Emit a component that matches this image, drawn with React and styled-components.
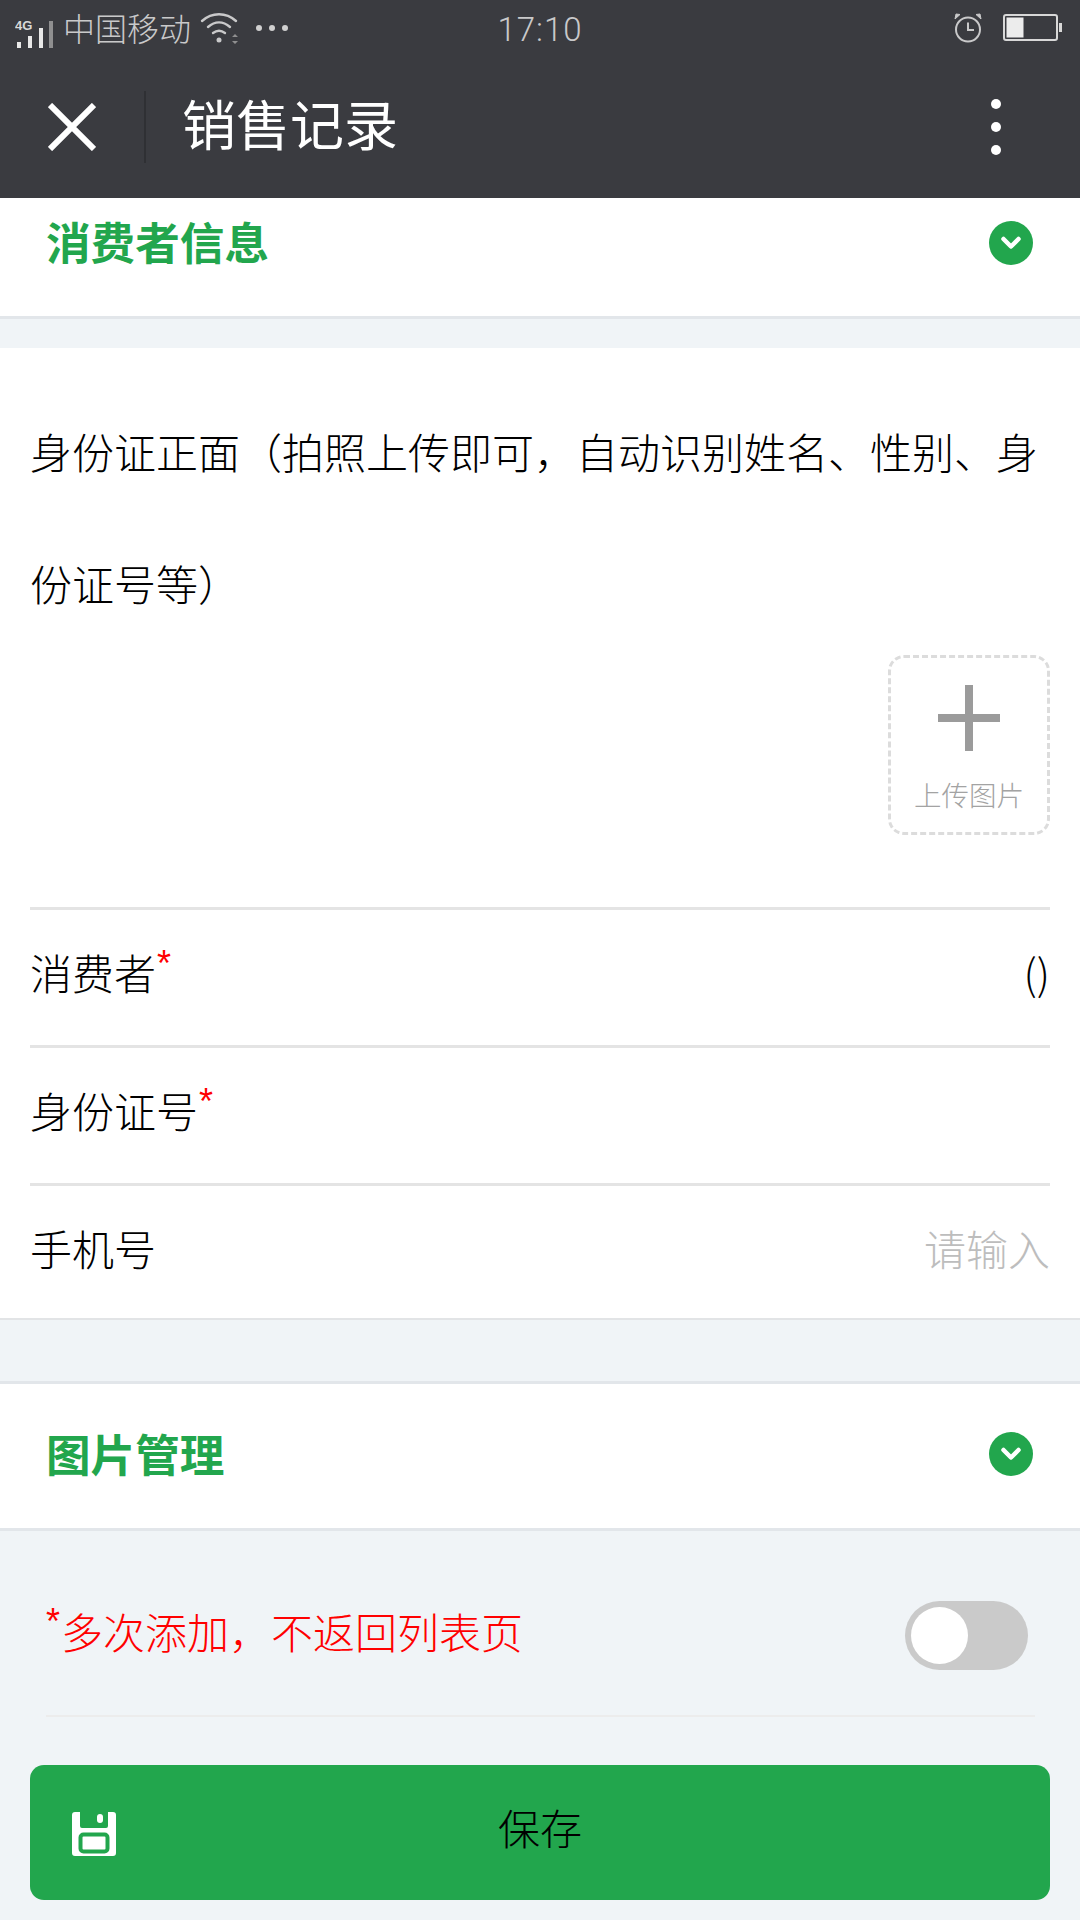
import React from 'react';
import styled, { createGlobalStyle } from 'styled-components';

const GlobalStyle = createGlobalStyle`
  html, body {
    margin: 0;
    padding: 0;
    background: #f0f4f7;
  }
  * {
    box-sizing: border-box;
  }
`;

const Page = styled.div`
  width: 1080px;
  height: 1920px;
  overflow: hidden;
  background: #f0f4f7;
  font-family: "Noto Sans CJK SC", "Noto Sans", sans-serif;
  color: #000;
`;

const TopBar = styled.header`
  height: 198px;
  background: #3a3b40;
`;

const StatusBar = styled.div`
  height: 55px;
  padding: 0 18px 0 15px;
  display: grid;
  grid-template-columns: 1fr auto 1fr;
  align-items: center;
  color: #c9c9ca;
`;

const StatusLeft = styled.div`
  display: flex;
  align-items: center;
`;

const StatusRight = styled.div`
  display: flex;
  align-items: center;
  justify-content: flex-end;
  gap: 21px;
`;

const Carrier = styled.span`
  font-size: 32px;
  line-height: 55px;
  margin: 0 9px 0 8px;
  font-weight: 300;
`;

const Clock = styled.span`
  font-family: "Roboto", sans-serif;
  font-weight: 300;
  font-size: 33px;
  letter-spacing: 1px;
  padding: 4px 0 0 3px;
`;

const NavBar = styled.div`
  height: 143px;
  display: flex;
  align-items: center;
`;

const CloseButton = styled.div`
  width: 146px;
  height: 72px;
  display: flex;
  align-items: center;
  justify-content: center;
  border-right: 2px solid #2f3034;
`;

const NavTitle = styled.h1`
  flex: 1;
  margin: 0 0 8px 36px;
  font-size: 54px;
  font-weight: 400;
  color: #fff;
  line-height: 72px;
`;

const MenuDots = styled.div`
  width: 10px;
  margin-right: 79px;
  display: flex;
  flex-direction: column;
  gap: 13px;
  span {
    width: 10px;
    height: 10px;
    border-radius: 50%;
    background: #fff;
  }
`;

const SectionHead = styled.div`
  background: #fff;
  height: ${(p) => p.$height}px;
  padding: 0 47px ${(p) => p.$padBottom}px 46px;
  display: flex;
  align-items: center;
  justify-content: space-between;
  border-top: ${(p) => (p.$topLine ? '3px solid #e2e6ea' : 'none')};
  border-bottom: 3px solid #e2e6ea;
`;

const SectionTitle = styled.h2`
  margin: -4px 0 0;
  font-size: 44.6px;
  font-weight: 700;
  color: #22a64d;
`;

const ExpandIcon = styled.span`
  width: 44px;
  height: 44px;
  border-radius: 50%;
  background: #22a64d;
  display: flex;
  align-items: center;
  justify-content: center;
`;

const FormCard = styled.section`
  margin-top: 29px;
  background: #fff;
  padding: 37px 30px 0;
  border-bottom: 2px solid #e2e4e6;
`;

const IdPrompt = styled.div`
  font-size: 42px;
  line-height: 132px;
  font-weight: 300;
`;

const UploadRow = styled.div`
  display: flex;
  justify-content: flex-end;
  height: 252px;
  margin-top: 6px;
`;

const UploadBox = styled.div`
  width: 162px;
  height: 180px;
  border: 3px dashed #dcdcdc;
  border-radius: 16px;
  display: flex;
  flex-direction: column;
  align-items: center;
`;

const PlusMark = styled.div`
  position: relative;
  width: 62px;
  height: 66px;
  margin-top: 27px;
  &::before,
  &::after {
    content: '';
    position: absolute;
    background: #9b9b9b;
  }
  &::before {
    left: 0;
    right: 0;
    top: 29px;
    height: 8px;
  }
  &::after {
    top: 0;
    bottom: 0;
    left: 27px;
    width: 8px;
  }
`;

const UploadLabel = styled.div`
  margin-top: 25px;
  font-size: 27.5px;
  line-height: 36px;
  font-weight: 300;
  color: #a3a3a3;
`;

const FieldRow = styled.div`
  height: ${(p) => p.$height}px;
  padding-bottom: ${(p) => p.$padBottom}px;
  display: flex;
  align-items: center;
  justify-content: space-between;
  font-size: 42px;
  font-weight: 300;
  border-top: 3px solid #e4e4e4;
`;

const FieldLabel = styled.label`
  display: block;
`;

const Required = styled.sup`
  color: #f00;
  font-family: "Liberation Sans", sans-serif;
  font-size: 36px;
  line-height: 0;
  vertical-align: 14px;
  margin-left: 1px;
`;

const FieldValue = styled.span`
  color: ${(p) => (p.$placeholder ? '#bdbdbd' : '#000')};
`;

const OptionRow = styled.div`
  margin: 70px 45px 0 46px;
  height: 116px;
  padding: 0 7px 46px 0;
  display: flex;
  align-items: center;
  justify-content: space-between;
  border-bottom: 2px solid #ececec;
`;

const OptionText = styled.div`
  margin-top: -10px;
  font-size: 42px;
  color: #f00;
  font-weight: 300;
  display: flex;
  align-items: center;
`;

const OptionStar = styled.span`
  font-family: "Liberation Sans", sans-serif;
  font-size: 36px;
  line-height: 1;
  margin-right: 1px;
  transform: translateY(-8px);
`;

const Switch = styled.div`
  width: 123px;
  height: 69px;
  border-radius: 35px;
  background: #cacaca;
  padding: 6px;
`;

const SwitchKnob = styled.div`
  width: 57px;
  height: 57px;
  border-radius: 50%;
  background: #fff;
`;

const SaveButton = styled.button`
  display: flex;
  align-items: center;
  justify-content: center;
  position: relative;
  width: 1020px;
  height: 135px;
  margin: 48px 0 0 30px;
  padding: 0 0 12px;
  border: none;
  border-radius: 14px;
  background: #22a64d;
  font-family: inherit;
  font-size: 42px;
  font-weight: 300;
  color: #000;
`;

const SaveIcon = styled.svg`
  position: absolute;
  left: 42px;
  top: 47px;
`;

const StatusGap = styled.span`
  width: 17px;
`;

const Spacer = styled.div`
  height: 61px;
`;

const SignalIcon = () => (
  <svg width="40" height="42" viewBox="0 0 40 42">
    <text x="0" y="23" fontFamily="Liberation Sans, sans-serif" fontSize="13" fontWeight="700" fill="#d8d8d8">4G</text>
    <rect x="2" y="35" width="4" height="6" fill="#e8e8e8" />
    <rect x="13" y="29" width="4" height="12" fill="#e8e8e8" />
    <rect x="24" y="21" width="4" height="20" fill="#e8e8e8" />
    <rect x="34" y="14" width="4" height="27" fill="#8f8f90" />
  </svg>
);

const WifiIcon = () => (
  <svg width="38" height="34" viewBox="0 0 38 34" fill="none" stroke="#c9c9ca" strokeWidth="2.4" strokeLinecap="round">
    <path d="M2 10 C12 1 26 1 36 10" />
    <path d="M8 16 C15 10 23 10 30 16" />
    <path d="M13 22 C17 19 21 19 25 22" />
    <circle cx="19" cy="29" r="2.5" fill="#c9c9ca" stroke="none" />
    <path d="M32 26 l3 -3 l3 3 z M32 30 l3 3 l3 -3 z" fill="#8f8f90" stroke="none" />
  </svg>
);

const MoreDots = () => (
  <svg width="34" height="8" viewBox="0 0 34 8" fill="#d0d0d0">
    <circle cx="4" cy="4" r="3" />
    <circle cx="17" cy="4" r="3" />
    <circle cx="30" cy="4" r="3" />
  </svg>
);

const AlarmIcon = () => (
  <svg width="28" height="30" viewBox="0 0 28 30" fill="none" stroke="#c9c9ca" strokeWidth="2">
    <circle cx="14" cy="16.5" r="12" />
    <path d="M14 9.5 V17 H20" />
    <path d="M1 6 L6 1.5 L2 1 Z M27 6 L22 1.5 L26 1 Z" fill="#c9c9ca" strokeWidth="1" />
  </svg>
);

const BatteryIcon = () => (
  <svg width="59" height="28" viewBox="0 0 59 28">
    <rect x="1" y="1" width="53" height="25" rx="2" fill="none" stroke="#d8d8d8" strokeWidth="2" />
    <rect x="3.5" y="3.5" width="17" height="20" fill="#ececec" />
    <rect x="56" y="9" width="3" height="9" fill="#d8d8d8" />
  </svg>
);

const Chevron = () => (
  <svg width="22" height="16" viewBox="0 0 22 16" fill="none" stroke="#fff" strokeWidth="4.5" strokeLinecap="round" strokeLinejoin="round">
    <path d="M3.5 4 L11 11.5 L18.5 4" />
  </svg>
);

const CloseIcon = () => (
  <svg width="48" height="48" viewBox="0 0 48 48" stroke="#fff" strokeWidth="6">
    <path d="M2 2 L46 46 M46 2 L2 46" />
  </svg>
);

const App = () => (
  <Page>
    <GlobalStyle />
    <TopBar>
      <StatusBar>
        <StatusLeft>
          <SignalIcon />
          <Carrier>中国移动</Carrier>
          <WifiIcon />
          <StatusGap />
          <MoreDots />
        </StatusLeft>
        <Clock>17:10</Clock>
        <StatusRight>
          <AlarmIcon />
          <BatteryIcon />
        </StatusRight>
      </StatusBar>
      <NavBar>
        <CloseButton><CloseIcon /></CloseButton>
        <NavTitle>销售记录</NavTitle>
        <MenuDots><span /><span /><span /></MenuDots>
      </NavBar>
    </TopBar>

    <SectionHead $height={121} $padBottom={29}>
      <SectionTitle>消费者信息</SectionTitle>
      <ExpandIcon><Chevron /></ExpandIcon>
    </SectionHead>

    <FormCard>
      <IdPrompt>身份证正面（拍照上传即可，自动识别姓名、性别、身份证号等）</IdPrompt>
      <UploadRow>
        <UploadBox>
          <PlusMark />
          <UploadLabel>上传图片</UploadLabel>
        </UploadBox>
      </UploadRow>
      <FieldRow $height={138} $padBottom={12}>
        <FieldLabel>消费者<Required>*</Required></FieldLabel>
        <FieldValue>()</FieldValue>
      </FieldRow>
      <FieldRow $height={138} $padBottom={12}>
        <FieldLabel>身份证号<Required>*</Required></FieldLabel>
      </FieldRow>
      <FieldRow $height={135} $padBottom={10}>
        <FieldLabel>手机号</FieldLabel>
        <FieldValue $placeholder>请输入</FieldValue>
      </FieldRow>
    </FormCard>

    <Spacer />
    <SectionHead $height={150} $padBottom={4} $topLine>
      <SectionTitle>图片管理</SectionTitle>
      <ExpandIcon><Chevron /></ExpandIcon>
    </SectionHead>

    <OptionRow>
      <OptionText><OptionStar>*</OptionStar>多次添加，不返回列表页</OptionText>
      <Switch><SwitchKnob /></Switch>
    </OptionRow>

    <SaveButton>
      <SaveIcon width="44" height="44" viewBox="0 0 44 44">
        <path fill="#fff" d="M3 0 H8 V14 Q8 16 10 16 H34 Q36 16 36 14 V0 H41 Q44 0 44 3 V41 Q44 44 41 44 H3 Q0 44 0 41 V3 Q0 0 3 0 Z" />
        <rect x="25" y="2" width="6" height="9" rx="3" fill="#fff" />
        <rect x="8.5" y="22.5" width="27" height="17" rx="3" fill="#fff" stroke="#22a64d" strokeWidth="4" />
      </SaveIcon>
      保存
    </SaveButton>
  </Page>
);

export default App;
